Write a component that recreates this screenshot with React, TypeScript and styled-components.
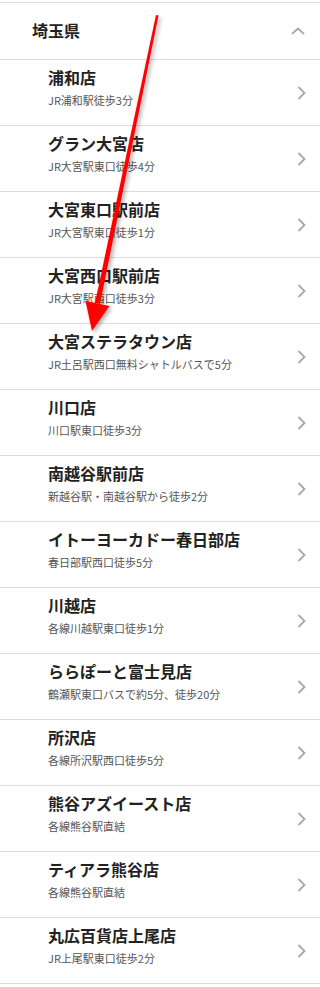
import React from "react";
import styled, { createGlobalStyle } from "styled-components";

const GlobalStyle = createGlobalStyle`
	html, body {
		margin: 0;
		padding: 0;
		background: #fff;
	}
	body {
		font-family: "Noto Sans CJK JP", "Noto Sans", sans-serif;
		color: #222;
	}
`;

const Page = styled.div`
	position: relative;
	width: 320px;
	padding-top: 2px;
	overflow: hidden;
`;

const Section = styled.section`
	border-top: 1px solid #dcdcdc;
`;

const AreaHeader = styled.div`
	display: flex;
	align-items: center;
	justify-content: space-between;
	height: 56px;
	padding: 0 15px 0 32px;
	border-bottom: 1px solid #dcdcdc;
`;

const AreaTitle = styled.h2`
	margin: 0 0 3px;
	font-size: 16px;
	line-height: 20px;
	font-weight: 700;
	color: #222;
`;

const ShopList = styled.ul`
	list-style: none;
	margin: 0;
	padding: 0;
`;

const ShopRow = styled.li`
	display: flex;
	align-items: center;
	justify-content: space-between;
	height: 65px;
	padding: 0 14px 0 48px;
	border-bottom: 1px solid #dcdcdc;
`;

const ShopText = styled.div`
	display: flex;
	flex-direction: column;
	gap: 4px;
	padding-bottom: 11px;
`;

const ShopName = styled.span`
	font-size: 16px;
	line-height: 22px;
	font-weight: 700;
	color: #222;
	white-space: nowrap;
`;

const ShopAccess = styled.span`
	font-size: 11px;
	line-height: 16px;
	color: #555;
	white-space: nowrap;
`;

const Overlay = styled.svg`
	position: absolute;
	left: 0;
	top: 0;
	pointer-events: none;
`;

const shops = [
	{ name: "浦和店", access: "JR浦和駅徒歩3分" },
	{ name: "グラン大宮店", access: "JR大宮駅東口徒歩4分" },
	{ name: "大宮東口駅前店", access: "JR大宮駅東口徒歩1分" },
	{ name: "大宮西口駅前店", access: "JR大宮駅西口徒歩3分" },
	{ name: "大宮ステラタウン店", access: "JR土呂駅西口無料シャトルバスで5分" },
	{ name: "川口店", access: "川口駅東口徒歩3分" },
	{ name: "南越谷駅前店", access: "新越谷駅・南越谷駅から徒歩2分" },
	{ name: "イトーヨーカドー春日部店", access: "春日部駅西口徒歩5分" },
	{ name: "川越店", access: "各線川越駅東口徒歩1分" },
	{ name: "ららぽーと富士見店", access: "鶴瀬駅東口バスで約5分、徒歩20分" },
	{ name: "所沢店", access: "各線所沢駅西口徒歩5分" },
	{ name: "熊谷アズイースト店", access: "各線熊谷駅直結" },
	{ name: "ティアラ熊谷店", access: "各線熊谷駅直結" },
	{ name: "丸広百貨店上尾店", access: "JR上尾駅東口徒歩2分" },
];

const ChevronUp = () => (
	<svg width="14" height="8" viewBox="0 0 14 8">
		<path d="M1 7 L7 1.5 L13 7" fill="none" stroke="#a8a8a8" strokeWidth="1.8" />
	</svg>
);

const ChevronRight = () => (
	<svg width="9" height="14" viewBox="0 0 9 14">
		<path d="M1.5 1 L7.5 7 L1.5 13" fill="none" stroke="#a8a8a8" strokeWidth="1.8" />
	</svg>
);

// red annotation arrow drawn on top of the list
const Arrow = () => (
	<Overlay width="320" height="987" viewBox="0 0 320 987">
		<defs>
			<filter id="shadow" x="-50%" y="-10%" width="200%" height="120%">
				<feGaussianBlur in="SourceAlpha" stdDeviation="2" />
				<feOffset dx="2" dy="2" />
				<feComponentTransfer>
					<feFuncA type="linear" slope="0.35" />
				</feComponentTransfer>
				<feMerge>
					<feMergeNode />
					<feMergeNode in="SourceGraphic" />
				</feMerge>
			</filter>
		</defs>
		<g filter="url(#shadow)">
			<polygon points="156,15 158.5,15.5 100,304 95,303" fill="#ff0000" />
			<polygon points="85.5,301 109.5,306 92,331" fill="#ff0000" />
		</g>
	</Overlay>
);

export default function App() {
	return (
		<>
			<GlobalStyle />
			<Page>
				<Section>
					<AreaHeader>
						<AreaTitle>埼玉県</AreaTitle>
						<ChevronUp />
					</AreaHeader>
					<ShopList>
						{shops.map((shop) => (
							<ShopRow key={shop.name}>
								<ShopText>
									<ShopName>{shop.name}</ShopName>
									<ShopAccess>{shop.access}</ShopAccess>
								</ShopText>
								<ChevronRight />
							</ShopRow>
						))}
					</ShopList>
				</Section>
				<Arrow />
			</Page>
		</>
	);
}
